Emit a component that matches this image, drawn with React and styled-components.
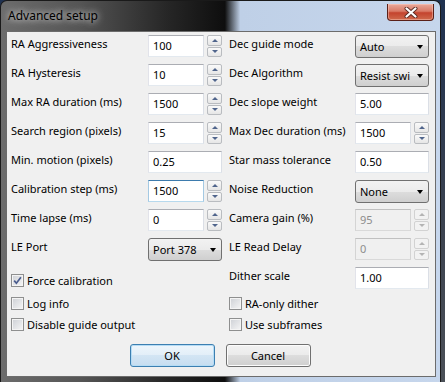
import React from 'react';
import styled, { createGlobalStyle } from 'styled-components';

const GlobalStyle = createGlobalStyle`
  html, body {
    margin: 0;
    padding: 0;
  }
  body {
    background: #2a3240;
    font-family: "Noto Sans", "Open Sans", sans-serif;
  }
`;

const Desktop = styled.div`
  width: 445px;
  height: 382px;
  overflow: hidden;
  display: flex;
  background: linear-gradient(#1f3150, #3c4350 60%, #4b5058);
`;

const Frame = styled.div`
  width: 441px;
  height: 382px;
  box-sizing: border-box;
  padding: 0 4px 5px 5px;
  border: 1px solid #1a1a1a;
  border-bottom: none;
  border-radius: 7px 7px 0 0;
  background: linear-gradient(to right, #6c6c6c 0%, #555 18%, #262626 38%, #0e0e0e 51%, #bfd0e7 54.5%, #c6d6ec 100%);
  display: flex;
  flex-direction: column;
`;

const TitleBar = styled.div`
  height: 30px;
  display: flex;
  justify-content: space-between;
  align-items: flex-start;
`;

const Title = styled.div`
  margin: 7px 0 0 2px;
  font-size: 12px;
  line-height: 16px;
  color: #000;
  text-shadow: 0 0 6px rgba(255, 255, 255, 0.8), 0 0 10px rgba(255, 255, 255, 0.5);
`;

const CloseButton = styled.div`
  width: 47px;
  height: 17px;
  margin: 3px 2px 0 0;
  box-sizing: border-box;
  border: 1px solid #5a2018;
  border-top: none;
  border-radius: 0 0 4px 4px;
  background: linear-gradient(#e9a99b 0%, #d97a66 45%, #c4432e 55%, #cf6a4c 100%);
  box-shadow: inset 0 0 0 1px rgba(255, 210, 200, 0.45);
  display: flex;
  align-items: center;
  justify-content: center;
`;

const Client = styled.div`
  flex: 1;
  background: #f0f0f0;
  border: 1px solid rgba(0, 0, 0, 0.55);
  padding: 3px 6px 0 4px;
  display: flex;
  flex-direction: column;
`;

const FormGrid = styled.div`
  display: grid;
  grid-template-columns: 211px 200px;
  grid-auto-rows: 22px;
  column-gap: 7px;
  row-gap: 7px;
`;

const Field = styled.div`
  display: grid;
  grid-template-columns: ${(p) => p.$labelWidth}px 1fr;
  align-items: start;
`;

const Label = styled.span`
  padding-top: 1px;
  font-size: 11px;
  line-height: 16px;
  color: #000;
  white-space: nowrap;
`;

const SpinBox = styled.div`
  display: flex;
  gap: 3px;
`;

const TextInput = styled.div`
  width: ${(p) => (p.$narrow ? '56px' : '74px')};
  height: 22px;
  box-sizing: border-box;
  border: 1px solid;
  border-color: ${(p) =>
    p.$focused
      ? '#3d7bad #a4c9e3 #b7d9ed #a4c9e3'
      : p.$disabled
      ? '#c0c0c0 #d4d4d4 #d9d9d9 #d4d4d4'
      : '#abadb3 #dbdfe6 #e3e9ef #e2e3ea'};
  background: ${(p) => (p.$disabled ? '#f0f0f0' : '#fff')};
  color: ${(p) => (p.$disabled ? '#8d8d8d' : '#000')};
  font-size: 11px;
  line-height: 20px;
  padding-left: 4px;
`;

const Spinner = styled.div`
  width: 15px;
  height: 22px;
  display: flex;
  flex-direction: column;
  gap: 1px;
`;

const SpinHalf = styled.div`
  flex: 1;
  box-sizing: border-box;
  border: 1px solid ${(p) => (p.$disabled ? '#d2d2d2' : '#b9bcc0')};
  border-radius: 2px;
  background: ${(p) =>
    p.$disabled ? '#f2f2f2' : 'linear-gradient(#fafafa, #e6e6e6)'};
  display: flex;
  align-items: center;
  justify-content: center;
`;

const Arrow = styled.span`
  width: 0;
  height: 0;
  border-left: 3px solid transparent;
  border-right: 3px solid transparent;
  ${(p) => (p.$up ? 'border-bottom' : 'border-top')}: 3px solid ${(p) =>
      p.$disabled ? '#b4b4b4' : '#50658c'};
`;

const Select = styled.div`
  width: 74px;
  height: 23px;
  box-sizing: border-box;
  border: 1px solid #707070;
  border-radius: 3px;
  background: linear-gradient(#f2f2f2 0%, #ebebeb 50%, #dddddd 50%, #cfcfcf 100%);
  display: flex;
  align-items: center;
  padding: 0 5px 0 4px;
  font-size: 11px;
  color: #000;
`;

const SelectText = styled.span`
  flex: 1;
  white-space: nowrap;
`;

const SelectArrow = styled.span`
  margin-left: 3px;
  width: 0;
  height: 0;
  border-left: 3.5px solid transparent;
  border-right: 3.5px solid transparent;
  border-top: 4px solid #000;
`;

const CheckRows = styled.div`
  margin-top: 4px;
  display: grid;
  grid-template-columns: 211px 200px;
  grid-auto-rows: 21px;
  column-gap: 7px;
`;

const CheckLabel = styled.label`
  display: flex;
  align-items: center;
  gap: 3px;
  font-size: 11px;
  color: #000;
  white-space: nowrap;
  ${(p) => p.$inField && 'height: 22px; padding-top: 2px;'}
`;

const Box = styled.span`
  width: 13px;
  height: 13px;
  box-sizing: border-box;
  border: 1px solid #8e8f8f;
  background: linear-gradient(135deg, #cdd0d5, #f6f6f6);
  box-shadow: inset 0 0 0 1px #f4f4f4;
  display: flex;
  align-items: center;
  justify-content: center;
`;

const ButtonRow = styled.div`
  margin-top: 9px;
  display: flex;
  justify-content: center;
  gap: 11px;
`;

const Button = styled.div`
  width: 85px;
  height: 23px;
  box-sizing: border-box;
  border: 1px solid ${(p) => (p.$default ? '#3c7fb1' : '#707070')};
  border-radius: 3px;
  background: ${(p) =>
    p.$default
      ? 'linear-gradient(#eef6fc 0%, #e2eef8 50%, #d3e5f4 50%, #c6ddf0 100%)'
      : 'linear-gradient(#f2f2f2 0%, #ebebeb 50%, #dddddd 50%, #cfcfcf 100%)'};
  box-shadow: inset 0 0 0 1px ${(p) => (p.$default ? '#b5dcf5' : '#fcfcfc')};
  display: flex;
  align-items: center;
  justify-content: center;
  font-size: 11px;
  color: #000;
`;

const Spin = ({ disabled }) => (
  <Spinner>
    <SpinHalf $disabled={disabled}><Arrow $up $disabled={disabled} /></SpinHalf>
    <SpinHalf $disabled={disabled}><Arrow $disabled={disabled} /></SpinHalf>
  </Spinner>
);

const SpinInput = ({ value, focused, disabled }) => (
  <SpinBox>
    <TextInput $narrow $focused={focused} $disabled={disabled}>{value}</TextInput>
    <Spin disabled={disabled} />
  </SpinBox>
);

const Combo = ({ value }) => (
  <Select>
    <SelectText>{value}</SelectText>
    <SelectArrow />
  </Select>
);

const CheckBox = ({ checked }) => (
  <Box>
    {checked && (
      <svg width="9" height="9" viewBox="0 0 9 9">
        <path d="M1.2 4.6 L3.4 7.2 L7.9 1.2" stroke="#4a5c8e" strokeWidth="1.7" fill="none" />
      </svg>
    )}
  </Box>
);

const leftRows = [
  { label: 'RA Aggressiveness', control: <SpinInput value="100" /> },
  { label: 'RA Hysteresis', control: <SpinInput value="10" /> },
  { label: 'Max RA duration (ms)', control: <SpinInput value="1500" /> },
  { label: 'Search region (pixels)', control: <SpinInput value="15" /> },
  { label: 'Min. motion (pixels)', control: <TextInput>0.25</TextInput> },
  { label: 'Calibration step (ms)', control: <SpinInput value="1500" focused /> },
  { label: 'Time lapse (ms)', control: <SpinInput value="0" /> },
  { label: 'LE Port', control: <Combo value="Port 378" /> },
];

const rightRows = [
  { label: 'Dec guide mode', control: <Combo value="Auto" /> },
  { label: 'Dec Algorithm', control: <Combo value="Resist swi" /> },
  { label: 'Dec slope weight', control: <TextInput>5.00</TextInput> },
  { label: 'Max Dec duration (ms)', control: <SpinInput value="1500" /> },
  { label: 'Star mass tolerance', control: <TextInput>0.50</TextInput> },
  { label: 'Noise Reduction', control: <Combo value="None" /> },
  { label: 'Camera gain (%)', control: <SpinInput value="95" disabled /> },
  { label: 'LE Read Delay', control: <SpinInput value="0" disabled /> },
];

const App = () => (
  <>
    <GlobalStyle />
    <Desktop>
      <Frame>
        <TitleBar>
          <Title>Advanced setup</Title>
          <CloseButton>
            <svg width="14" height="11" viewBox="0 0 14 11">
              <path d="M2.5 1.5 L11.5 9.5 M11.5 1.5 L2.5 9.5" stroke="#5b2a22" strokeWidth="4" strokeLinecap="round" />
              <path d="M2.5 1.5 L11.5 9.5 M11.5 1.5 L2.5 9.5" stroke="#fff" strokeWidth="2.2" strokeLinecap="round" />
            </svg>
          </CloseButton>
        </TitleBar>
        <Client>
          <FormGrid>
            {leftRows.map((row, i) => (
              <React.Fragment key={row.label}>
                <Field $labelWidth={137}>
                  <Label>{row.label}</Label>
                  {row.control}
                </Field>
                <Field $labelWidth={126}>
                  <Label>{rightRows[i].label}</Label>
                  {rightRows[i].control}
                </Field>
              </React.Fragment>
            ))}
            <CheckLabel $inField>
              <CheckBox checked />
              Force calibration
            </CheckLabel>
            <Field $labelWidth={126}>
              <Label>Dither scale</Label>
              <TextInput>1.00</TextInput>
            </Field>
          </FormGrid>
          <CheckRows>
            <CheckLabel><CheckBox />Log info</CheckLabel>
            <CheckLabel><CheckBox />RA-only dither</CheckLabel>
            <CheckLabel><CheckBox />Disable guide output</CheckLabel>
            <CheckLabel><CheckBox />Use subframes</CheckLabel>
          </CheckRows>
          <ButtonRow>
            <Button $default>OK</Button>
            <Button>Cancel</Button>
          </ButtonRow>
        </Client>
      </Frame>
    </Desktop>
  </>
);

export default App;
